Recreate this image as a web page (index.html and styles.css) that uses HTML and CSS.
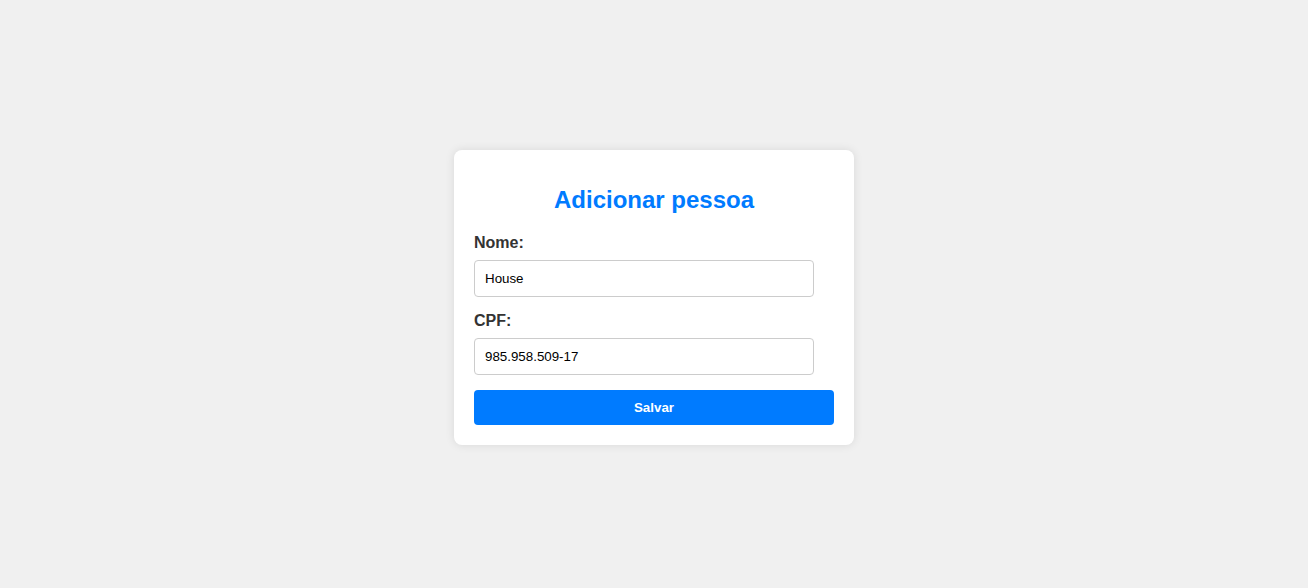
FILE: index.html
```html
<!DOCTYPE html>
<html lang="pt-BR">
<head>
<meta charset="utf-8">
<title>Adicionar pessoa</title>
<link rel="stylesheet" href="styles.css">
</head>
<body>
<form class="card">
  <h2 class="title">Adicionar pessoa</h2>
  <label class="label" for="nome">Nome:</label>
  <input class="field" id="nome" type="text" value="House">
  <label class="label" for="cpf">CPF:</label>
  <input class="field" id="cpf" type="text" value="985.958.509-17">
  <button class="btn" type="button">Salvar</button>
</form>
</body>
</html>
```
FILE: styles.css
```css
* { box-sizing: border-box; }
html, body { margin: 0; }
body {
  min-height: 100vh;
  padding-top: 6px;
  background: #f0f0f0;
  font-family: "Liberation Sans", Arial, sans-serif;
  display: flex;
  align-items: center;
  justify-content: center;
}
.card {
  width: 400px;
  background: #fff;
  padding: 20px;
  border-radius: 8px;
  box-shadow: 0 0 10px rgba(0, 0, 0, 0.1);
  display: flex;
  flex-direction: column;
  align-items: flex-start;
}
.title {
  align-self: stretch;
  margin: 16px 0 20px;
  font-size: 24px;
  font-weight: bold;
  color: #007bff;
  text-align: center;
}
.label {
  display: block;
  font-size: 16px;
  font-weight: bold;
  color: #333;
  margin-bottom: 8px;
}
.field {
  width: 340px;
  padding: 10px;
  border: 1px solid #ccc;
  border-radius: 4px;
  font-family: "Liberation Sans", Arial, sans-serif;
  font-size: 13.333px;
  color: #000;
  margin: 0 0 15px;
  background: #fff;
}
.btn {
  align-self: stretch;
  padding: 10px;
  border: none;
  border-radius: 4px;
  background: #007bff;
  color: #fff;
  font-family: "Liberation Sans", Arial, sans-serif;
  font-size: 13.333px;
  font-weight: bold;
  cursor: pointer;
}
```
